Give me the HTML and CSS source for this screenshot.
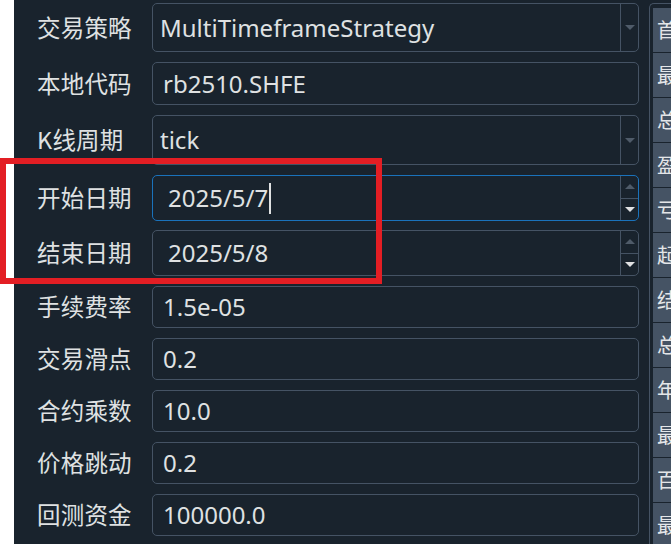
FILE: index.html
```html
<!DOCTYPE html>
<html lang="zh">
<head>
<meta charset="utf-8">
<link rel="stylesheet" href="styles.css">
</head>
<body>
<div class="app">
  <div class="strip"></div>
  <div class="form">
    <div class="row h-combo">
      <div class="label">交易策略</div>
      <div class="field combo"><span class="val">MultiTimeframeStrategy</span><span class="drop"><i class="tri dim"></i></span></div>
    </div>
    <div class="row h-line">
      <div class="label">本地代码</div>
      <div class="field line"><span class="val">rb2510.SHFE</span></div>
    </div>
    <div class="row h-combo2">
      <div class="label">K线周期</div>
      <div class="field combo"><span class="val">tick</span><span class="drop"><i class="tri dim"></i></span></div>
    </div>
    <div class="row h-date">
      <div class="label">开始日期</div>
      <div class="field date focus"><span class="val">2025/5/7</span><span class="caret"></span><span class="spin"><span class="btn"><i class="up dim"></i></span><span class="btn"><i class="tri light"></i></span></span></div>
    </div>
    <div class="row h-date gap9">
      <div class="label">结束日期</div>
      <div class="field date"><span class="val">2025/5/8</span><span class="spin"><span class="btn"><i class="up dim"></i></span><span class="btn"><i class="tri light"></i></span></span></div>
    </div>
    <div class="row h-line2">
      <div class="label">手续费率</div>
      <div class="field line"><span class="val">1.5e-05</span></div>
    </div>
    <div class="row h-line2">
      <div class="label">交易滑点</div>
      <div class="field line"><span class="val">0.2</span></div>
    </div>
    <div class="row h-line2">
      <div class="label">合约乘数</div>
      <div class="field line"><span class="val">10.0</span></div>
    </div>
    <div class="row h-line2">
      <div class="label">价格跳动</div>
      <div class="field line"><span class="val">0.2</span></div>
    </div>
    <div class="row h-line2">
      <div class="label">回测资金</div>
      <div class="field line"><span class="val">100000.0</span></div>
    </div>
  </div>
  <div class="panel">
    <div class="table">
      <div class="cell">首个交易日</div>
      <div class="cell">最后交易日</div>
      <div class="cell">总交易日</div>
      <div class="cell">盈利交易日</div>
      <div class="cell">亏损交易日</div>
      <div class="cell">起始资金</div>
      <div class="cell">结束资金</div>
      <div class="cell">总收益率</div>
      <div class="cell">年化收益</div>
      <div class="cell">最大回撤</div>
      <div class="cell">百分比最大回撤</div>
      <div class="cell">最大回撤天数</div>
    </div>
  </div>
  <div class="mark"></div>
</div>
</body>
</html>
```

FILE: styles.css
```css
* { box-sizing: border-box; }
html, body { margin: 0; padding: 0; }
body {
  width: 671px;
  height: 544px;
  overflow: hidden;
  background: #19232d;
  font-family: "Noto Sans", "Noto Sans CJK SC", sans-serif;
  color: #dfe1e2;
}
.app {
  position: relative;
  display: flex;
  width: 671px;
  height: 544px;
}
.strip {
  width: 14px;
  flex: none;
  background: #ffffff;
}
.form {
  width: 625px;
  flex: none;
  padding-top: 3px;
  display: flex;
  flex-direction: column;
  gap: 10px;
}
.row {
  display: flex;
  align-items: center;
  height: 43px;
}
.row.gap9 { margin-top: -1px; }
.h-combo { height: 49px; }
.h-combo2 { height: 50px; }
.h-line { height: 43px; }
.h-line2 { height: 42px; }
.h-date { height: 46px; }
.label {
  width: 138px;
  flex: none;
  padding-left: 23px;
  font-family: "Noto Sans CJK SC", sans-serif;
  font-size: 23.5px;
  letter-spacing: 0.2px;
  color: #dfe1e2;
  line-height: 1;
}
.field {
  position: relative;
  flex: none;
  width: 487px;
  height: 100%;
  border: 1px solid #455364;
  border-radius: 5px;
  display: flex;
  align-items: center;
  font-size: 24px;
  line-height: 1;
}
.field.focus { border-color: #1a72bb; }
.combo .val { padding-left: 7px; flex: 1; }
.line .val { padding-left: 10px; flex: 1; }
.date .val { padding-left: 15px; }
.date { }
.caret {
  width: 2px;
  height: 31px;
  margin-left: 1px;
  background: #dfe1e2;
}
.drop {
  margin-left: auto;
  width: 18px;
  height: 100%;
  border-left: 1px solid #455364;
  display: flex;
  align-items: center;
  justify-content: center;
}
.spin {
  margin-left: auto;
  width: 18px;
  height: 100%;
  border-left: 1px solid #455364;
  display: flex;
  flex-direction: column;
}
.btn {
  flex: 1;
  display: flex;
  align-items: center;
  justify-content: center;
}
.btn + .btn { border-top: 1px solid #455364; }
.tri, .up {
  display: block;
  width: 0;
  height: 0;
  border-left: 5px solid transparent;
  border-right: 5px solid transparent;
}
.tri { border-top: 5px solid #5b6877; }
.up { border-bottom: 5px solid #5b6877; }
.tri.dim { border-top-color: #4f5b69; border-left-width: 5px; border-right-width: 5px; }
.up.dim { border-bottom-color: #4f5b69; }
.tri.light { border-top-color: #e0e1e3; }
.panel {
  flex: none;
  width: 32px;
  margin-left: 10px;
  padding-top: 3px;
  display: flex;
}
.table {
  flex: 1;
  border-left: 1px solid #455364;
  border-top: 1px solid #455364;
  border-top-left-radius: 5px;
  padding: 4px 0 0 3px;
}
.cell {
  height: 45px;
  background: #455364;
  border-bottom: 1px solid #19232d;
  white-space: nowrap;
  overflow: hidden;
  padding-left: 4px;
  font-family: "Noto Sans CJK SC", sans-serif;
  font-size: 20px;
  line-height: 44px;
  color: #e4e6e8;
}
.mark {
  position: absolute;
  left: 0;
  top: 158px;
  width: 382px;
  height: 126px;
  border: 6px solid #e31e24;
}
```
